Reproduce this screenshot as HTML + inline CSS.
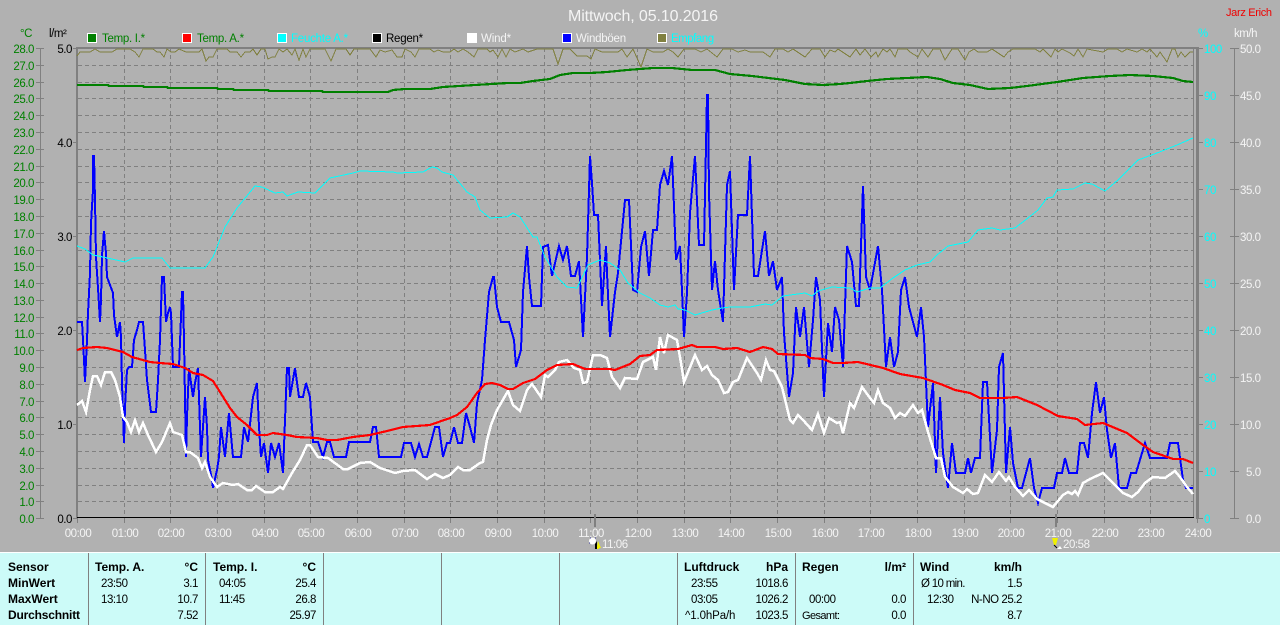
<!DOCTYPE html>
<html><head><meta charset="utf-8"><title>Mittwoch, 05.10.2016</title>
<style>
html,body{margin:0;padding:0;background:#b1b1b1;width:1280px;height:625px;overflow:hidden}
svg{display:block;position:absolute;left:0;top:0}
text{font-family:"Liberation Sans",sans-serif;font-size:11.5px;letter-spacing:-.45px}
.lg{font-size:11.5px;letter-spacing:-.1px}
.g{fill:#008000}.k{fill:#000}.c{fill:#00ffff}.w{fill:#f4f4f4}
.e{text-anchor:end}.m{text-anchor:middle}
.b{font-weight:bold;fill:#000;font-size:12px;letter-spacing:0}
.l{fill:none;shape-rendering:crispEdges;stroke-linejoin:miter}
</style></head><body>
<svg width="1280" height="625" viewBox="0 0 1280 625" xmlns="http://www.w3.org/2000/svg">
<rect width="1280" height="625" fill="#b1b1b1"/>
<!-- titles -->
<text x="568" y="21" style="font-size:16px;letter-spacing:0" class="w" textLength="150">Mittwoch, 05.10.2016</text>
<text x="1226" y="16" style="fill:#f00000;font-size:11px;letter-spacing:0" textLength="46">Jarz Erich</text>
<!-- legend -->
<g stroke="#fff" stroke-width="1" shape-rendering="crispEdges">
<rect x="87.5" y="33.500" width="9" height="9" fill="#008000"/>
<rect x="182.5" y="33.500" width="9" height="9" fill="#ff0000"/>
<rect x="277.5" y="33.500" width="9" height="9" fill="#00ffff"/>
<rect x="372.5" y="33.500" width="9" height="9" fill="#000"/>
<rect x="467.5" y="33.500" width="9" height="9" fill="#fff"/>
<rect x="562.5" y="33.500" width="9" height="9" fill="#0000ff"/>
<rect x="657.5" y="33.500" width="9" height="9" fill="#808040"/>
</g>
<text x="102" y="42" class="g lg" textLength="43">Temp. I.*</text>
<text x="197" y="42" class="g lg" textLength="47">Temp. A.*</text>
<text x="291" y="42" class="c lg" textLength="57">Feuchte A.*</text>
<text x="386" y="42" class="k lg" textLength="37">Regen*</text>
<text x="481" y="42" class="w lg" textLength="30">Wind*</text>
<text x="576" y="42" class="w lg" textLength="50">Windböen</text>
<text x="671" y="42" class="c lg" textLength="43">Empfang</text>
<text x="20" y="37" class="g">°C</text>
<text x="49" y="37" class="k">l/m²</text>
<text x="1198" y="37" class="c">%</text>
<text x="1234" y="37" class="w">km/h</text>
<!-- grid -->
<g stroke="#808080" stroke-width="1" fill="none" shape-rendering="crispEdges">
<path stroke-dasharray="4 3" d="M78 65.5H1193M78 82.5H1193M78 98.5H1193M78 115.5H1193M78 132.5H1193M78 149.5H1193M78 166.5H1193M78 182.5H1193M78 199.5H1193M78 216.5H1193M78 233.5H1193M78 250.5H1193M78 266.5H1193M78 283.5H1193M78 300.5H1193M78 317.5H1193M78 333.5H1193M78 350.5H1193M78 367.5H1193M78 384.5H1193M78 401.5H1193M78 417.5H1193M78 434.5H1193M78 451.5H1193M78 468.5H1193M78 485.5H1193M78 501.5H1193"/>
<path stroke-dasharray="4 3" d="M124.5 48V517M170.5 48V517M217.5 48V517M264.5 48V517M310.5 48V517M357.5 48V517M404.5 48V517M450.5 48V517M497.5 48V517M544.5 48V517M590.5 48V517M637.5 48V517M684.5 48V517M730.5 48V517M777.5 48V517M824.5 48V517M870.5 48V517M917.5 48V517M964.5 48V517M1010.5 48V517M1057.5 48V517M1104.5 48V517M1150.5 48V517"/>
<path d="M124.5 518V523M170.5 518V523M217.5 518V523M264.5 518V523M310.5 518V523M357.5 518V523M404.5 518V523M450.5 518V523M497.5 518V523M544.5 518V523M590.5 518V523M637.5 518V523M684.5 518V523M730.5 518V523M777.5 518V523M824.5 518V523M870.5 518V523M917.5 518V523M964.5 518V523M1010.5 518V523M1057.5 518V523M1104.5 518V523M1150.5 518V523M1197.5 518V523M77.5 518V523"/>
<!-- left axis -->
<path d="M40.5 48V518M36 48.5H44M36 65.5H44M36 82.5H44M36 98.5H44M36 115.5H44M36 132.5H44M36 149.5H44M36 166.5H44M36 182.5H44M36 199.5H44M36 216.5H44M36 233.5H44M36 250.5H44M36 266.5H44M36 283.5H44M36 300.5H44M36 317.5H44M36 333.5H44M36 350.5H44M36 367.5H44M36 384.5H44M36 401.5H44M36 417.5H44M36 434.5H44M36 451.5H44M36 468.5H44M36 485.5H44M36 501.5H44M36 518.5H44"/>
<path d="M73 48.5H77M73 142.5H77M73 236.5H77M73 330.5H77M73 424.5H77M73 518.5H77"/>
<!-- right axes -->
<path d="M1193.5 48V518"/>
<path d="M1198 48.5H1203M1198 95.5H1203M1198 142.5H1203M1198 189.5H1203M1198 236.5H1203M1198 283.5H1203M1198 330.5H1203M1198 377.5H1203M1198 424.5H1203M1198 471.5H1203M1198 518.5H1203"/>
<path d="M1234.5 48V518M1230 48.5H1239M1230 95.5H1239M1230 142.5H1239M1230 189.5H1239M1230 236.5H1239M1230 283.5H1239M1230 330.5H1239M1230 377.5H1239M1230 424.5H1239M1230 471.5H1239M1230 518.5H1239"/>
</g>
<rect x="1196" y="47" width="3" height="472" fill="#808080"/>
<rect x="76" y="47" width="2" height="472" fill="#808080"/>
<rect x="76" y="47" width="1120" height="2" fill="#808080"/>
<rect x="77" y="517" width="1117" height="1" fill="#000"/>
<rect x="594" y="514" width="2" height="13" fill="#808080"/>
<rect x="1055" y="514" width="2" height="13" fill="#808080"/>
<!-- axis labels -->
<g transform="translate(0,1)">
<text class="g e" x="34" y="52">28.0</text><text class="g e" x="34" y="69">27.0</text><text class="g e" x="34" y="86">26.0</text><text class="g e" x="34" y="102">25.0</text><text class="g e" x="34" y="119">24.0</text><text class="g e" x="34" y="136">23.0</text><text class="g e" x="34" y="153">22.0</text><text class="g e" x="34" y="170">21.0</text><text class="g e" x="34" y="186">20.0</text><text class="g e" x="34" y="203">19.0</text><text class="g e" x="34" y="220">18.0</text><text class="g e" x="34" y="237">17.0</text><text class="g e" x="34" y="254">16.0</text><text class="g e" x="34" y="270">15.0</text><text class="g e" x="34" y="287">14.0</text><text class="g e" x="34" y="304">13.0</text><text class="g e" x="34" y="321">12.0</text><text class="g e" x="34" y="337">11.0</text><text class="g e" x="34" y="354">10.0</text><text class="g e" x="34" y="371">9.0</text><text class="g e" x="34" y="388">8.0</text><text class="g e" x="34" y="405">7.0</text><text class="g e" x="34" y="421">6.0</text><text class="g e" x="34" y="438">5.0</text><text class="g e" x="34" y="455">4.0</text><text class="g e" x="34" y="472">3.0</text><text class="g e" x="34" y="489">2.0</text><text class="g e" x="34" y="505">1.0</text><text class="g e" x="34" y="522">0.0</text>
</g>
<text class="k e" x="72" y="53">5.0</text><text class="k e" x="72" y="147">4.0</text><text class="k e" x="72" y="241">3.0</text><text class="k e" x="72" y="335">2.0</text><text class="k e" x="72" y="429">1.0</text><text class="k e" x="72" y="523">0.0</text>
<text class="c" x="1204" y="53">100</text><text class="c" x="1204" y="100">90</text><text class="c" x="1204" y="147">80</text><text class="c" x="1204" y="194">70</text><text class="c" x="1204" y="241">60</text><text class="c" x="1204" y="288">50</text><text class="c" x="1204" y="335">40</text><text class="c" x="1204" y="382">30</text><text class="c" x="1204" y="429">20</text><text class="c" x="1204" y="476">10</text><text class="c" x="1204" y="523">0</text>
<text class="w" x="1240" y="53">50.0</text><text class="w" x="1240" y="100">45.0</text><text class="w" x="1240" y="147">40.0</text><text class="w" x="1240" y="194">35.0</text><text class="w" x="1240" y="241">30.0</text><text class="w" x="1240" y="288">25.0</text><text class="w" x="1240" y="335">20.0</text><text class="w" x="1240" y="382">15.0</text><text class="w" x="1240" y="429">10.0</text><text class="w" x="1246" y="476">5.0</text><text class="w" x="1246" y="523">0.0</text>
<text class="w m" x="78" y="537">00:00</text><text class="w m" x="125" y="537">01:00</text><text class="w m" x="171" y="537">02:00</text><text class="w m" x="218" y="537">03:00</text><text class="w m" x="265" y="537">04:00</text><text class="w m" x="311" y="537">05:00</text><text class="w m" x="358" y="537">06:00</text><text class="w m" x="405" y="537">07:00</text><text class="w m" x="451" y="537">08:00</text><text class="w m" x="498" y="537">09:00</text><text class="w m" x="545" y="537">10:00</text><text class="w m" x="591" y="537">11:00</text><text class="w m" x="638" y="537">12:00</text><text class="w m" x="685" y="537">13:00</text><text class="w m" x="731" y="537">14:00</text><text class="w m" x="778" y="537">15:00</text><text class="w m" x="825" y="537">16:00</text><text class="w m" x="871" y="537">17:00</text><text class="w m" x="918" y="537">18:00</text><text class="w m" x="965" y="537">19:00</text><text class="w m" x="1011" y="537">20:00</text><text class="w m" x="1058" y="537">21:00</text><text class="w m" x="1105" y="537">22:00</text><text class="w m" x="1151" y="537">23:00</text><text class="w m" x="1198" y="537">24:00</text>
<text class="w" x="602" y="548">11:06</text>
<text class="w" x="1063" y="548">20:58</text>
<!-- markers -->
<circle cx="592.5" cy="541" r="3.5" fill="#fff"/><path d="M590 538h1M595 538h1M589 543h1" stroke="#4040a0" fill="none"/>
<path d="M595 544L597 541L597 549H595Z" fill="#000"/><path d="M598 541L601 548H599V549H597V547Z" fill="#f0f000"/>
<path d="M1052 538H1058L1056 545H1054Z" fill="#f0f000"/><path d="M1054 545L1057 548" stroke="#000" fill="none"/><path d="M1057 549L1060 546L1062 549Z" fill="#fff"/>
<!-- olive -->
<polyline class="l" stroke="#808040" stroke-width="1" points="77,56 80,52 90,52 95,49 100,52 112,52 117,49 130,49 135,52 139,57 143,49 153,49 157,52 160,52 164,57 167,49 171,52 175,52 179,49 186,52 199,52 202,49 206,61 209,57 213,57 217,49 227,49 230,52 237,52 241,57 245,52 250,52 253,49 257,55 261,49 265,49 268,59 272,57 275,57 279,49 283,52 287,49 292,55 295,49 299,60 303,49 306,57 310,49 325,49 331,61 336,49 346,49 350,55 354,49 370,49 376,57 380,50 385,52 392,50 397,57 402,57 405,49 411,52 415,57 419,49 430,49 434,52 438,50 443,52 450,52 454,49 458,52 463,49 468,52 474,57 478,49 487,49 490,52 493,50 498,57 502,49 506,57 510,49 515,52 523,49 528,52 537,49 553,49 558,64 563,49 570,49 577,56 587,56 591,59 595,49 602,52 618,52 622,49 627,57 633,49 641,67 647,49 653,52 663,52 668,49 673,52 678,57 684,49 695,49 701,52 707,49 717,57 723,49 732,49 738,52 745,50 750,52 763,52 770,57 775,49 783,49 788,52 793,49 805,57 812,49 820,49 825,57 830,50 835,52 838,49 850,57 856,49 860,55 865,49 871,57 876,52 878,57 883,49 887,52 890,49 895,57 898,49 907,49 910,52 918,57 922,49 928,57 933,49 940,49 945,60 952,49 958,49 965,60 969,52 974,49 978,52 987,52 992,49 998,53 1004,57 1008,52 1013,49 1035,49 1040,52 1043,49 1051,57 1055,49 1058,52 1062,49 1070,53 1074,56 1078,49 1083,57 1087,49 1103,52 1108,49 1117,49 1122,52 1127,49 1137,52 1142,49 1147,52 1150,49 1157,57 1160,52 1167,62 1172,49 1175,49 1178,57 1181,52 1185,57 1190,52 1193,52"/>
<!-- blue -->
<polyline class="l" stroke="#0000ff" stroke-width="2" points="77,322 82,322 83,340 84,360 85,382 87,340 88,313 90,273 91,223 93,190 93,156 94,156 95,200 96,257 98,288 100,322 101,300 102,255 104,231 105,243 106,253 107,277 110,285 113,293 114,315 117,337 120,322 121,337 122,383 124,443 125,407 127,370 129,367 132,367 134,340 137,330 139,322 143,322 145,350 147,380 151,412 156,412 158,380 160,340 162,277 164,277 166,322 168,313 170,307 171,313 173,367 179,367 182,292 183,292 184,340 186,457 187,417 189,368 191,383 193,397 195,383 198,368 199,397 201,457 203,427 205,397 207,427 208,460 212,480 213,488 217,470 219,457 221,427 223,442 225,457 229,413 233,457 241,457 244,427 248,442 253,397 257,383 259,427 261,457 264,443 268,473 271,443 275,457 279,443 283,473 285,420 287,368 289,368 290,397 295,368 299,397 303,397 306,383 310,397 313,442 318,442 323,457 327,442 330,442 334,457 346,457 349,442 370,442 373,427 376,427 379,457 401,457 404,443 411,443 415,457 419,444 423,457 427,457 435,427 439,427 443,457 447,443 450,443 454,427 458,443 462,443 466,413 470,427 474,443 477,403 482,380 485,340 489,292 493,277 494,277 497,307 501,322 509,322 514,340 516,367 521,350 523,292 527,246 529,277 532,306 541,306 543,247 548,245 552,276 559,246 563,260 567,246 571,276 575,276 579,261 583,337 587,257 590,156 592,183 594,215 598,215 602,306 606,246 607,273 610,337 615,292 618,273 625,200 629,200 633,290 637,292 641,247 645,231 649,276 653,230 657,230 660,185 664,171 668,185 672,156 674,207 676,260 680,246 683,313 684,337 687,293 690,213 695,156 698,223 699,245 704,245 707,95 708,95 709,193 712,290 715,261 718,290 723,322 727,185 730,171 734,290 738,215 747,215 750,156 753,246 754,276 758,276 765,231 769,276 773,261 777,290 782,277 784,333 789,397 793,373 796,307 800,337 804,307 809,367 813,320 816,277 820,300 824,397 828,323 832,352 835,307 839,320 843,367 847,246 852,262 856,306 859,306 863,186 866,277 870,290 878,246 882,290 886,367 890,337 894,367 898,352 901,290 905,277 909,307 917,337 921,307 924,337 928,427 933,383 936,473 940,397 943,453 948,488 952,443 956,473 965,473 968,458 971,473 975,458 980,458 983,382 987,382 992,473 997,430 999,367 1003,353 1006,473 1010,427 1013,463 1018,488 1022,488 1030,458 1034,488 1038,503 1042,488 1054,488 1057,473 1062,473 1065,458 1069,473 1077,473 1080,443 1084,443 1088,458 1092,413 1096,382 1100,413 1104,397 1107,430 1111,458 1115,443 1119,488 1127,488 1131,473 1136,473 1145,443 1150,458 1167,458 1170,443 1178,443 1183,480 1186,488 1193,488"/>
<!-- white -->
<polyline class="l" stroke="#ffffff" stroke-width="2.5" points="77,405 82,401 86,412 90,390 93,376 97,376 101,385 105,372 111,372 115,380 120,397 123,417 127,422 131,432 135,420 139,432 143,423 148,435 156,452 162,442 170,423 173,432 182,435 186,452 190,452 198,458 202,468 205,462 210,477 217,487 223,483 233,485 238,484 247,490 252,490 256,486 265,492 273,492 280,487 283,489 292,473 300,460 307,445 310,445 318,457 328,458 343,469 348,469 360,463 370,462 380,468 395,473 403,471 415,470 427,479 435,474 443,478 450,475 458,467 463,470 470,470 480,463 483,462 487,440 491,425 497,410 508,391 513,405 520,411 527,390 532,384 541,397 545,375 548,377 555,370 559,362 567,360 574,368 580,370 583,383 587,382 593,355 600,355 607,358 612,377 620,388 625,378 637,379 643,362 653,357 656,370 660,337 664,353 668,335 677,340 681,363 684,382 695,355 702,370 707,366 712,375 718,380 724,393 728,392 733,382 738,380 747,358 757,373 761,380 766,360 770,370 774,371 782,387 790,420 793,423 798,415 803,420 812,430 818,414 824,433 829,418 837,423 840,422 843,433 850,403 854,408 862,387 870,398 874,403 878,390 883,403 890,408 895,418 900,413 905,416 913,405 918,413 922,410 928,432 936,458 941,458 945,477 953,487 963,493 967,489 973,494 978,493 985,475 992,482 999,472 1006,481 1009,477 1015,487 1023,496 1029,490 1037,499 1053,507 1063,495 1068,492 1072,494 1075,491 1078,495 1083,483 1090,479 1103,473 1110,480 1123,493 1132,497 1138,492 1145,483 1153,477 1165,478 1175,471 1180,477 1187,487 1193,494"/>
<!-- red -->
<polyline class="l" stroke="#ff0000" stroke-width="2.2" points="77,350 83,348 97,347 107,348 123,352 132,357 150,362 160,363 173,364 185,368 193,373 203,375 213,381 220,392 230,408 237,417 247,425 257,435 267,435 273,433 287,435 297,437 317,438 327,440 337,440 353,437 370,435 387,431 403,427 430,425 450,418 457,415 467,407 477,393 485,384 492,383 500,385 508,389 513,389 523,383 535,379 547,370 557,365 573,364 585,369 610,369 615,370 630,364 640,356 650,355 657,350 678,349 692,345 697,347 715,347 723,349 737,348 750,352 763,347 772,349 778,354 805,355 810,358 823,359 833,363 843,363 858,362 883,368 900,374 923,378 943,385 955,390 970,393 980,398 1003,398 1017,397 1037,405 1058,416 1077,419 1085,425 1103,423 1127,433 1143,445 1153,452 1173,459 1183,459 1193,463"/>
<!-- green -->
<polyline class="l" stroke="#008000" stroke-width="2.2" points="77,85 108,85 109,86 143,86 144,87 167,87 168,88 217,88 218,89 233,89 234,90 268,90 269,91 322,91 323,92 388,92 393,90 405,89 430,89 443,87 475,85 508,83 520,83 533,81 550,79 560,75 573,73 590,73 607,72 627,70 653,68 672,68 692,70 715,70 730,74 752,76 785,80 805,84 823,85 840,84 850,83 867,81 887,79 907,78 927,77 940,79 953,83 970,85 988,89 1010,88 1027,86 1057,82 1083,78 1110,76 1130,75 1153,76 1173,78 1183,81 1193,82"/>
<!-- cyan -->
<polyline class="l" stroke="#00ffff" stroke-width="1" points="77,246 85,249 93,255 103,257 125,262 133,258 162,258 170,268 205,268 213,257 225,227 237,208 255,186 262,187 275,193 283,192 287,196 298,192 315,193 330,178 353,173 360,171 393,172 397,173 423,172 432,167 437,168 442,172 453,175 467,192 475,197 480,210 490,218 507,217 513,213 520,217 533,237 537,237 545,257 557,277 567,287 577,288 588,265 600,260 610,263 620,270 628,283 640,293 650,298 660,305 668,307 675,305 678,309 685,310 695,315 712,310 722,308 730,307 750,307 765,304 772,305 783,296 805,293 812,296 818,291 832,287 850,288 857,292 870,288 880,288 893,278 905,270 917,265 930,262 937,255 948,246 968,242 978,230 992,228 1000,230 1015,228 1028,218 1038,210 1047,198 1053,197 1057,190 1073,189 1085,183 1092,184 1105,191 1118,180 1138,160 1157,153 1177,145 1193,138"/>
<!-- bottom panel -->
<rect x="0" y="552" width="1280" height="1" fill="#ffffff"/>
<rect x="0" y="553" width="1280" height="72" fill="#ccfbf8"/>
<g fill="#808080" shape-rendering="crispEdges">
<rect x="88" y="553" width="1" height="72"/><rect x="205" y="553" width="1" height="72"/><rect x="323" y="553" width="1" height="72"/><rect x="441" y="553" width="1" height="72"/><rect x="559" y="553" width="1" height="72"/><rect x="677" y="553" width="1" height="72"/><rect x="795" y="553" width="1" height="72"/><rect x="913" y="553" width="1" height="72"/>
</g>
<text class="b" x="8" y="571">Sensor</text><text class="b" x="8" y="587">MinWert</text><text class="b" x="8" y="603">MaxWert</text><text class="b" x="8" y="619" textLength="72">Durchschnitt</text>
<text class="b" x="95" y="571">Temp. A.</text><text class="b e" x="198" y="571">°C</text>
<text class="k" x="101" y="587">23:50</text><text class="k e" x="198" y="587">3.1</text>
<text class="k" x="101" y="603">13:10</text><text class="k e" x="198" y="603">10.7</text>
<text class="k e" x="198" y="619">7.52</text>
<text class="b" x="213" y="571">Temp. I.</text><text class="b e" x="316" y="571">°C</text>
<text class="k" x="219" y="587">04:05</text><text class="k e" x="316" y="587">25.4</text>
<text class="k" x="219" y="603">11:45</text><text class="k e" x="316" y="603">26.8</text>
<text class="k e" x="316" y="619">25.97</text>
<text class="b" x="684" y="571">Luftdruck</text><text class="b e" x="788" y="571">hPa</text>
<text class="k" x="691" y="587">23:55</text><text class="k e" x="788" y="587">1018.6</text>
<text class="k" x="691" y="603">03:05</text><text class="k e" x="788" y="603">1026.2</text>
<text class="k" x="685" y="619" textLength="50">^1.0hPa/h</text><text class="k e" x="788" y="619">1023.5</text>
<text class="b" x="802" y="571">Regen</text><text class="b e" x="906" y="571">l/m²</text>
<text class="k" x="809" y="603">00:00</text><text class="k e" x="906" y="603">0.0</text>
<text class="k" x="802" y="619" style="font-size:11px;letter-spacing:0" textLength="38">Gesamt:</text><text class="k e" x="906" y="619">0.0</text>
<text class="b" x="920" y="571">Wind</text><text class="b e" x="1022" y="571">km/h</text>
<text class="k" x="921" y="587" textLength="44">Ø 10 min.</text><text class="k e" x="1022" y="587">1.5</text>
<text class="k" x="927" y="603">12:30</text><text class="k e" x="1022" y="603">N-NO 25.2</text>
<text class="k e" x="1022" y="619">8.7</text>
</svg>
</body></html>
